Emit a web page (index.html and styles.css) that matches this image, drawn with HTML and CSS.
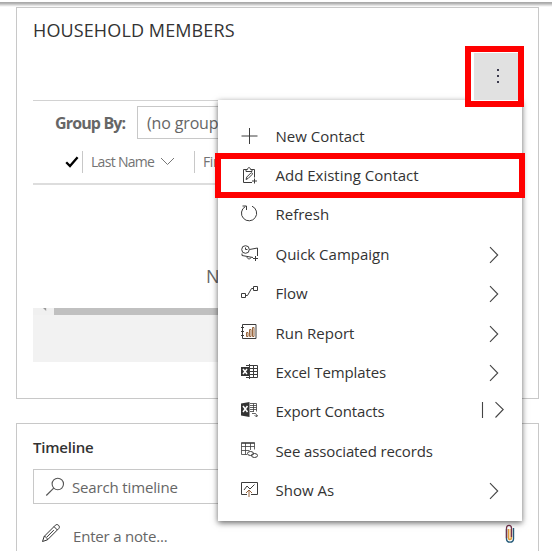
FILE: index.html
```html
<!DOCTYPE html>
<html lang="en">
<head>
<meta charset="utf-8">
<title>Household Members</title>
<link rel="stylesheet" href="styles.css">
</head>
<body>
<div class="page">
  <div class="topbar"></div>
  <section class="panel members">
    <h2 class="title"><span>HOUSEHOLD MEMBERS</span></h2>
    <div class="toolbar"></div>
    <div class="groupby">
      <label>Group By:</label>
      <div class="select">(no group)</div>
    </div>
    <div class="columns">
      <svg class="check" width="14" height="12" viewBox="0 0 14 12"><path d="M1.2 6.2 5 10 12.6 1.2" fill="none" stroke="#000" stroke-width="2.3"/></svg>
      <div class="col first"><span>Last Name</span><svg width="15" height="9" viewBox="0 0 15 9"><path d="M1 1l6.5 6.5L14 1" fill="none" stroke="#777"/></svg></div>
      <div class="col second"><span>First Name</span></div>
    </div>
    <div class="empty">No data</div>
    <div class="scroll"><div class="arrow"><svg width="4" height="3" viewBox="0 0 4 3"><path d="M0 0h3.2v3z" fill="#999"/></svg></div><div class="thumb"></div></div>
    <div class="footer"></div>
  </section>
  <section class="panel timeline">
    <h3 class="heading"><span>Timeline</span></h3>
    <div class="search">
      <svg width="20" height="20" viewBox="0 0 20 20"><circle cx="12.8" cy="7" r="5.7" fill="none" stroke="#555" stroke-width="1.1"/><path d="M8.7 11.1 1.3 18.5" stroke="#555" stroke-width="1.2"/></svg>
      <span>Search timeline</span>
    </div>
    <div class="note">
      <svg width="20" height="20" viewBox="0 0 20 20" fill="none" stroke="#333" stroke-width="1"><path d="M1.5 18.5l1.7-5.1L14.4 2.2c2-2 5.3 1.2 3.4 3.3L6.5 16.8zM13 3.6l3.4 3.4M3.2 13.4c1.6.2 3 1.6 3.3 3.4M12.8 7.1l-7 7"/></svg>
      <span>Enter a note...</span>
      <svg class="clip" width="10" height="20" viewBox="0 0 10 20" fill="none"><path d="M1.5 5v9.7c0 4.6 7 4.6 7 0V4" stroke="#245a78" stroke-width="1.4"/><path d="M6.3 5v9c0 2-2.7 2-2.7 0V5" stroke="#e29a35" stroke-width="1.6"/><path d="M1.5 14V4.3c0-4 5-4 5 0V13" stroke="#73334c" stroke-width="1.3"/></svg>
    </div>
  </section>

  <button class="more"><svg width="4" height="16" viewBox="0 0 4 16"><path d="M1 1h2v2H1zM1 7h2v2H1zM1 13h2v2H1z" fill="#3b3a4d"/></svg></button>

  <ul class="menu">
    <li><svg class="ic" viewBox="0 0 18 18"><path d="M9.5 1v16M1.5 9h16"/></svg><span>New Contact</span></li>
    <li class="marked"><svg class="ic" viewBox="0 0 18 18"><path d="M6 3.5H3.5v13H12M12 3.5h2.5v8M6 5.5v-2h1.5c0-2.5 3-2.5 3 0H12v2zM6 13.5l.8-2.5 4-4c1-.8 2.2.4 1.4 1.4l-4 4zM14.5 12.5v5M12 15h5"/></svg><span>Add Existing Contact</span></li>
    <li><svg class="ic" viewBox="0 0 18 18"><path d="M12 1.2A7.6 7.6 0 1 1 5.3 1.6M2.5 1h4v4"/></svg><span>Refresh</span></li>
    <li><svg class="ic" viewBox="0 0 18 18"><circle cx="5.5" cy="4.5" r="3.8"/><path d="M5.500 2.500v2h2M9.500 4.500l8-1.500v8M2 8.500v2l11 2M7 12c.3 2.300 3.500 2.500 4 .5M15.500 11v5M13 13.500h5"/></svg><span>Quick Campaign</span><svg class="chev" viewBox="0 0 10 18"><path d="M1 1.200l7.700 7.800L1 16.800"/></svg></li>
    <li><svg class="ic" viewBox="0 0 18 18"><path d="M1.500 9.500h4v4h-4zM13.500 2.500h4v4h-4zM5.500 11.500h2l4-7h2"/></svg><span>Flow</span><svg class="chev" viewBox="0 0 10 18"><path d="M1 1.200l7.700 7.800L1 16.800"/></svg></li>
    <li><svg class="ic" viewBox="0 0 18 18"><path d="M2.500 0.500h13.500v14H2.500zM1 3.500h3M1 7.500h3M1 11.500h3"/><path class="warm" d="M6.500 8.500h1.500v4h-1.500zM9.500 5.500h1.500v7h-1.500zM12.500 3.500h1.500v9h-1.500z"/></svg><span>Run Report</span><svg class="chev" viewBox="0 0 10 18"><path d="M1 1.200l7.700 7.800L1 16.800"/></svg></li>
    <li><svg class="ic" viewBox="0 0 18 18"><path d="M6 2.500h11.500v12H6M8 5.500h9.500M8 8.500h9.500M8 11.500h9.500M9.500 1v15M13.500 2.500v12"/><path class="solid" d="M1 4h8v9H1z"/><path class="light" d="M3 6l4 5M7 6l-4 5"/></svg><span class="snug">Excel Templates</span><svg class="chev" viewBox="0 0 10 18"><path d="M1 1.200l7.700 7.800L1 16.800"/></svg></li>
    <li><svg class="ic" viewBox="0 0 18 18"><path class="solid" d="M1 1.500 9.500 0v15L1 13.500z"/><path class="light" d="M3 4l4.500 6M7.500 4 3 10"/><path class="thin" d="M10 1.500h6.500v8M10 3.500h6.500M10 5.500h6.500M10 7.500h6.500M10 9.500h4M13.500 1.500v8M12 11.500h3c1.500 0 1.500 1 1.500 3M14.500 13l2 2 1.500-2"/></svg><span class="snug">Export Contacts</span><svg class="split" viewBox="0 0 24 18"><path d="M1.500 1v16M14.500 1.200l7.700 7.300-7.700 8"/></svg></li>
    <li><svg class="ic" viewBox="0 0 18 18"><path class="thin" d="M7 12.500H1.500v-12h13v7M1.500 1.500h13M1.500 4.500h13M1.500 8.500h8M5.500 1v11.500M10.500 1v7"/><ellipse cx="10.500" cy="11.500" rx="3" ry="2"/><ellipse cx="14.500" cy="13.500" rx="3" ry="2"/></svg><span class="snug">See associated records</span></li>
    <li><svg class="ic" viewBox="0 0 18 18"><path d="M7 13.500H1.500v-12h16v12H11M4 9l3-4 3 3 4.500-4.500"/><path class="warm" d="M9 16v-6.500M6 12l3-3 3 3"/></svg><span>Show As</span><svg class="chev" viewBox="0 0 10 18"><path d="M1 1.200l7.700 7.800L1 16.800"/></svg></li>
  </ul>
</div>
</body>
</html>
```
FILE: styles.css
```css
*, *::after { box-sizing: border-box; }
body { margin: 0; background: #fff; font-family: "Open Sans", "Noto Sans", sans-serif; color: #333; }
.page { position: relative; width: 552px; height: 551px; overflow: hidden; }
.topbar { height: 7px; background: linear-gradient(#fff 0 2px, #aaa 2px 3px, #b5b5b5 3px 4px, #ccc 4px 5px, #e2e2e2 5px 6px, #f7f7f7 6px 7px); }
.panel { width: 523px; margin-left: 16px; border: 1px solid #c8c8c8; padding: 0 16px; overflow: hidden; }
.members { height: 392px; }
.title { margin: 0; height: 45px; line-height: 45px; font-size: 18px; font-weight: 400; letter-spacing: .12px; }
.toolbar { height: 48px; border-bottom: 1px solid #d2d2d2; }
.groupby { display: flex; height: 38px; padding: 5px 0 0 22px; align-items: flex-start; color: #666; }
.groupby label { width: 82px; line-height: 34px; font-size: 16px; font-weight: 700; letter-spacing: -.85px; white-space: nowrap; }
.select { width: 200px; height: 33px; border: 1px solid #c8c8c8; padding-left: 9px; font-size: 16px; line-height: 33px; letter-spacing: -.15px; }
.columns { display: flex; height: 46px; padding-top: 12px; border-bottom: 2px solid #ddd; color: #737373; font-size: 14px; }
.check { margin: 5px 2px 0 32px; width: 14px; height: 12px; }
.col { display: flex; height: 22px; border-left: 1px solid #c8c8c8; line-height: 21px; white-space: nowrap; }
.first { width: 112px; margin-left: 1px; padding-left: 8px; letter-spacing: -.7px; }
.first svg { margin: 6px 0 0 6px; }
.second { padding-left: 8px; letter-spacing: -.4px; }
.empty { height: 123px; padding: 76px 0 0 173px; font-size: 18px; line-height: 30px; letter-spacing: -.6px; color: #666; }
.scroll { display: flex; height: 7px; }
.arrow { width: 21px; padding-left: 10px; background: #f0f0f0; line-height: 0; }
.arrow svg { display: block; }
.thumb { flex: 1; background: #c0c0c0; }
.footer { height: 47px; background: #f2f2f2; }
.timeline { margin-top: 24px; height: 150px; }
.heading { margin: 0; height: 45px; line-height: 46px; font-size: 15px; font-weight: 600; letter-spacing: -.2px; }
.search { display: flex; height: 35px; border: 1px solid #c8c8c8; padding-left: 11px; color: #666; font-size: 15px; line-height: 35px; letter-spacing: -.15px; }
.search svg { margin: 7px 7px 0 0; }
.note { display: flex; height: 50px; padding: 19px 0 0 8px; color: #666; font-size: 15px; line-height: 26px; letter-spacing: -.2px; }
.note > svg:first-child { margin: 0 12px 0 0; }
.note .clip { margin: 1px 7px 0 auto; }
.more { position: absolute; left: 465px; top: 46px; width: 59px; height: 61px; border: 6px solid #f00; padding: 0 0 0 7px; background: linear-gradient(#e1e1e1, #e1e1e1) 3px 1px / 44px 47px no-repeat #fff; line-height: 0; z-index: 2; }
.more svg { position: relative; top: -1px; }
.menu { position: absolute; left: 218px; top: 100px; width: 304px; height: 421px; margin: 0; padding: 16px 0 0; list-style: none; background: #fff; box-shadow: 0 2px 6px rgba(0,0,0,.6); }
.menu li { position: relative; display: flex; align-items: center; height: 39.4px; padding: 0 23px 0 22px; font-size: 15px; white-space: nowrap; }
.menu span { margin-left: 17.5px; }
.menu .snug { letter-spacing: -.12px; }
.marked::after { content: ""; position: absolute; left: -3px; top: -2px; width: 310px; height: 45px; border: 6px solid #f00; }
.ic { width: 18px; height: 18px; fill: none; stroke: #3c3c3c; stroke-width: 1; }
.ic .warm { stroke: #97653d; }
.ic .thin { stroke-width: .8; }
.ic .solid { fill: #333; stroke: none; }
.ic .light { stroke: #fff; stroke-width: 1.5; }
.chev { position: relative; top: 1px; width: 10px; height: 18px; margin-left: auto; fill: none; stroke: #444; stroke-width: 1.1; }
.split { position: relative; top: 1px; width: 24px; height: 18px; margin: -4px -6px 0 auto; fill: none; stroke: #444; stroke-width: 1.1; }
```
